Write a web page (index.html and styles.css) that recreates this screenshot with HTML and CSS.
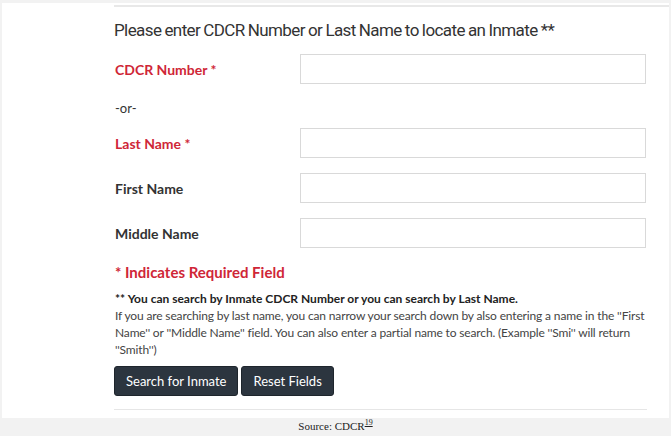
FILE: index.html
```html
<!DOCTYPE html>
<html>
<head>
<meta charset="utf-8">
<link rel="stylesheet" href="styles.css">
</head>
<body>
<div class="panel">
  <div class="top-rule"></div>
  <div class="content">
    <h2 class="title">Please enter CDCR Number or Last Name to locate an Inmate **</h2>
    <div class="row">
      <label class="label required">CDCR Number *</label>
      <input class="field" type="text">
    </div>
    <div class="or">-or-</div>
    <div class="row">
      <label class="label required">Last Name *</label>
      <input class="field" type="text">
    </div>
    <div class="row">
      <label class="label">First Name</label>
      <input class="field" type="text">
    </div>
    <div class="row">
      <label class="label">Middle Name</label>
      <input class="field" type="text">
    </div>
    <div class="req-note">* Indicates Required Field</div>
    <div class="help">
      <strong>** You can search by Inmate CDCR Number or you can search by Last Name.</strong><br>
      If you are searching by last name, you can narrow your search down by also entering a name in the ''First Name'' or ''Middle Name'' field. You can also enter a partial name to search. (Example ''Smi'' will return ''Smith'')
    </div>
    <div class="buttons">
      <button class="btn">Search for Inmate</button>
      <button class="btn">Reset Fields</button>
    </div>
    <div class="bottom-rule"></div>
  </div>
</div>
<div class="source">Source: CDCR<sup><a href="#">19</a></sup></div>
</body>
</html>
```

FILE: styles.css
```css
html, body {
  margin: 0;
  padding: 0;
}
body {
  background: #f2f2f2;
  width: 671px;
  height: 436px;
  overflow: hidden;
  font-family: "Lato", "Noto Sans", sans-serif;
  color: #333;
}
.panel {
  background: #fff;
  margin: 3px 2px 0 2px;
  height: 415px;
  box-sizing: border-box;
  padding-top: 2px;
}
.top-rule {
  margin-left: 112px;
  height: 2px;
  background: #e8e8e8;
}
.content {
  margin-left: 112px;
  width: 533px;
}
.title {
  margin: 0;
  padding-top: 11px;
  font-family: "Roboto", sans-serif;
  font-weight: 400;
  font-size: 17px;
  letter-spacing: -0.6px;
  word-spacing: -0.5px;
  line-height: 24px;
  color: #333;
  height: 32px;
}
.row {
  display: grid;
  grid-template-columns: 186px 346px;
  align-items: center;
  height: 30px;
  margin-top: 4px;
}
.row + .row {
  margin-top: 15px;
}
.label {
  font-weight: 700;
  font-size: 14px;
  color: #333;
  padding-left: 1px;
}
.label.required {
  color: #cf2637;
}
.field {
  box-sizing: border-box;
  height: 30px;
  width: 346px;
  margin: 0;
  border: 1px solid #d9d9d9;
  background: #fff;
}
.or {
  font-size: 13px;
  padding-left: 1px;
  height: 20px;
  line-height: 20px;
  margin-top: 14px;
  margin-bottom: 10px;
}
.req-note {
  margin-top: 14px;
  padding-left: 1px;
  font-weight: 700;
  font-size: 15px;
  color: #cf2637;
  line-height: 20px;
}
.help {
  margin-top: 8px;
  padding-left: 1px;
  font-size: 12px;
  letter-spacing: -0.15px;
  line-height: 17px;
  color: #444;
}
.help strong {
  color: #222;
  letter-spacing: 0;
}
.buttons {
  display: flex;
  gap: 3px;
  margin-top: 8px;
}
.btn {
  background: #2c353f;
  color: #fff;
  border: 1px solid #1e252c;
  border-radius: 3px;
  height: 30px;
  padding: 0 11px;
  font-family: "Lato", "Noto Sans", sans-serif;
  font-size: 13px;
}
.bottom-rule {
  margin-top: 13px;
  height: 1px;
  background: #e6e6e6;
}
.source {
  text-align: center;
  font-family: "Liberation Serif", serif;
  font-size: 11px;
  line-height: 14px;
  padding-top: 1px;
  color: #222;
}
.source sup {
  font-size: 8px;
  line-height: 0;
}
.source a {
  color: #222;
}
```
